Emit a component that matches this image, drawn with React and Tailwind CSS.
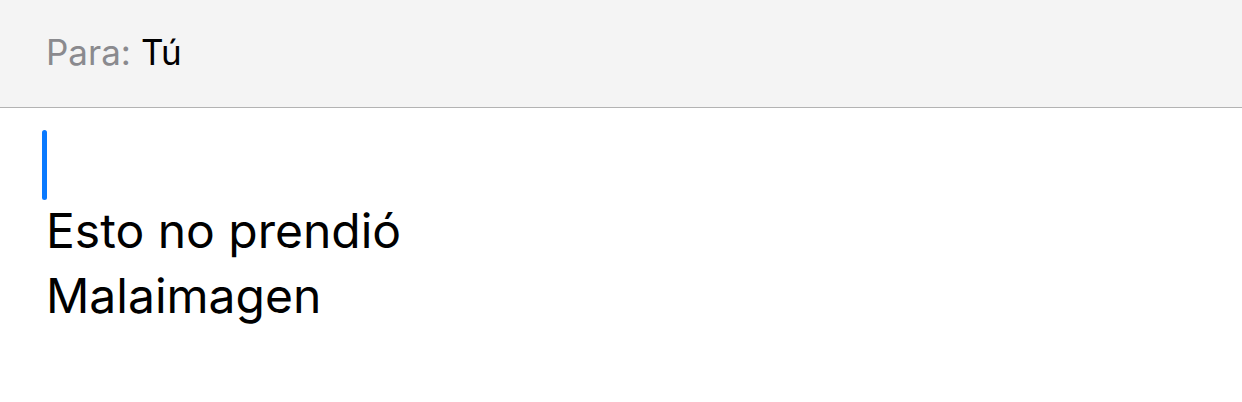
export default function App() {
  return (
    <div className="w-[1242px] h-[402px] bg-white overflow-hidden" style={{ fontFamily: 'Inter, "Noto Sans", sans-serif' }}>
      {/* Recipient row */}
      <div className="h-[108px] bg-[#f4f4f4] border-b border-[#b3b3b3] flex items-center pl-[46px] pb-[2px]">
        <span className="text-[35px] text-[#8a8a8e]">Para:</span>
        <span className="text-[35px] text-black ml-[10px]">Tú</span>
      </div>

      {/* Message body */}
      <div className="pl-[46px] pt-[22px]">
        <div className="w-[5px] h-[70px] rounded-full bg-[#0a7aff] -ml-[4px]" />
        <div className="text-[48px] leading-[65px] text-black -mt-[2px]">
          <div>Esto no prendió</div>
          <div>Malaimagen</div>
        </div>
      </div>
    </div>
  )
}
